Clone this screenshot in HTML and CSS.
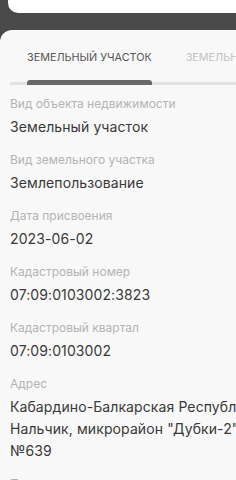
FILE: index.html
```html
<!DOCTYPE html>
<html lang="ru">
<head>
<meta charset="utf-8">
<link rel="stylesheet" href="styles.css">
</head>
<body>
<div class="backdrop">
  <div class="topcard"></div>
  <div class="sheet">
    <div class="tabs">
      <div class="tab active">Земельный участок</div>
      <div class="tab">Земельные права</div>
    </div>
    <div class="fields">
      <div class="field">
        <div class="label">Вид объекта недвижимости</div>
        <div class="value">Земельный участок</div>
      </div>
      <div class="field">
        <div class="label">Вид земельного участка</div>
        <div class="value">Землепользование</div>
      </div>
      <div class="field">
        <div class="label">Дата присвоения</div>
        <div class="value">2023-06-02</div>
      </div>
      <div class="field">
        <div class="label">Кадастровый номер</div>
        <div class="value">07:09:0103002:3823</div>
      </div>
      <div class="field">
        <div class="label">Кадастровый квартал</div>
        <div class="value">07:09:0103002</div>
      </div>
      <div class="field">
        <div class="label">Адрес</div>
        <div class="value">Кабардино-Балкарская Республика, г.<br>Нальчик, микрорайон "Дубки-2", участок<br>№639</div>
      </div>
      <div class="field">
        <div class="label">Площадь уточненная</div>
        <div class="value">1000 кв. м</div>
      </div>
    </div>
  </div>
</div>
</body>
</html>
```
FILE: styles.css
```css
html, body {
  margin: 0;
  padding: 0;
  overflow: hidden;
  background: #4a4a4a;
}
.backdrop {
  width: 320px;
  height: 480px;
  font-family: Inter, Roboto, "Noto Sans", sans-serif;
}
.topcard {
  height: 13px;
  margin-left: 8px;
  background: #ffffff;
  border-bottom-left-radius: 10px;
}
.sheet {
  margin-top: 17px;
  background: #f8f8f8;
  border-top-left-radius: 12px;
  height: 460px;
  overflow: hidden;
}
.tabs {
  display: flex;
  margin-left: 10px;
  padding-top: 20px;
  border-bottom: 3px solid #e2e2e2;
}
.tab {
  position: relative;
  padding: 0 17px 16px;
  font-size: 10.8px;
  line-height: 16px;
  text-transform: uppercase;
  color: #c2c2c2;
  white-space: nowrap;
}
.tab.active {
  color: #555555;
}
.tab.active::after {
  content: "";
  position: absolute;
  left: 17px;
  right: 17px;
  bottom: -3px;
  height: 5px;
  background: #686868;
  border-radius: 3px 3px 0 0;
}
.fields {
  padding: 10px 10px 0;
}
.field {
  margin-bottom: 13px;
}
.label {
  font-size: 12px;
  line-height: 18px;
  color: #b4b4b4;
  margin-bottom: 3px;
  white-space: nowrap;
}
.value {
  font-size: 14px;
  line-height: 22px;
  color: #383838;
  letter-spacing: 0.1px;
  white-space: nowrap;
}
```
